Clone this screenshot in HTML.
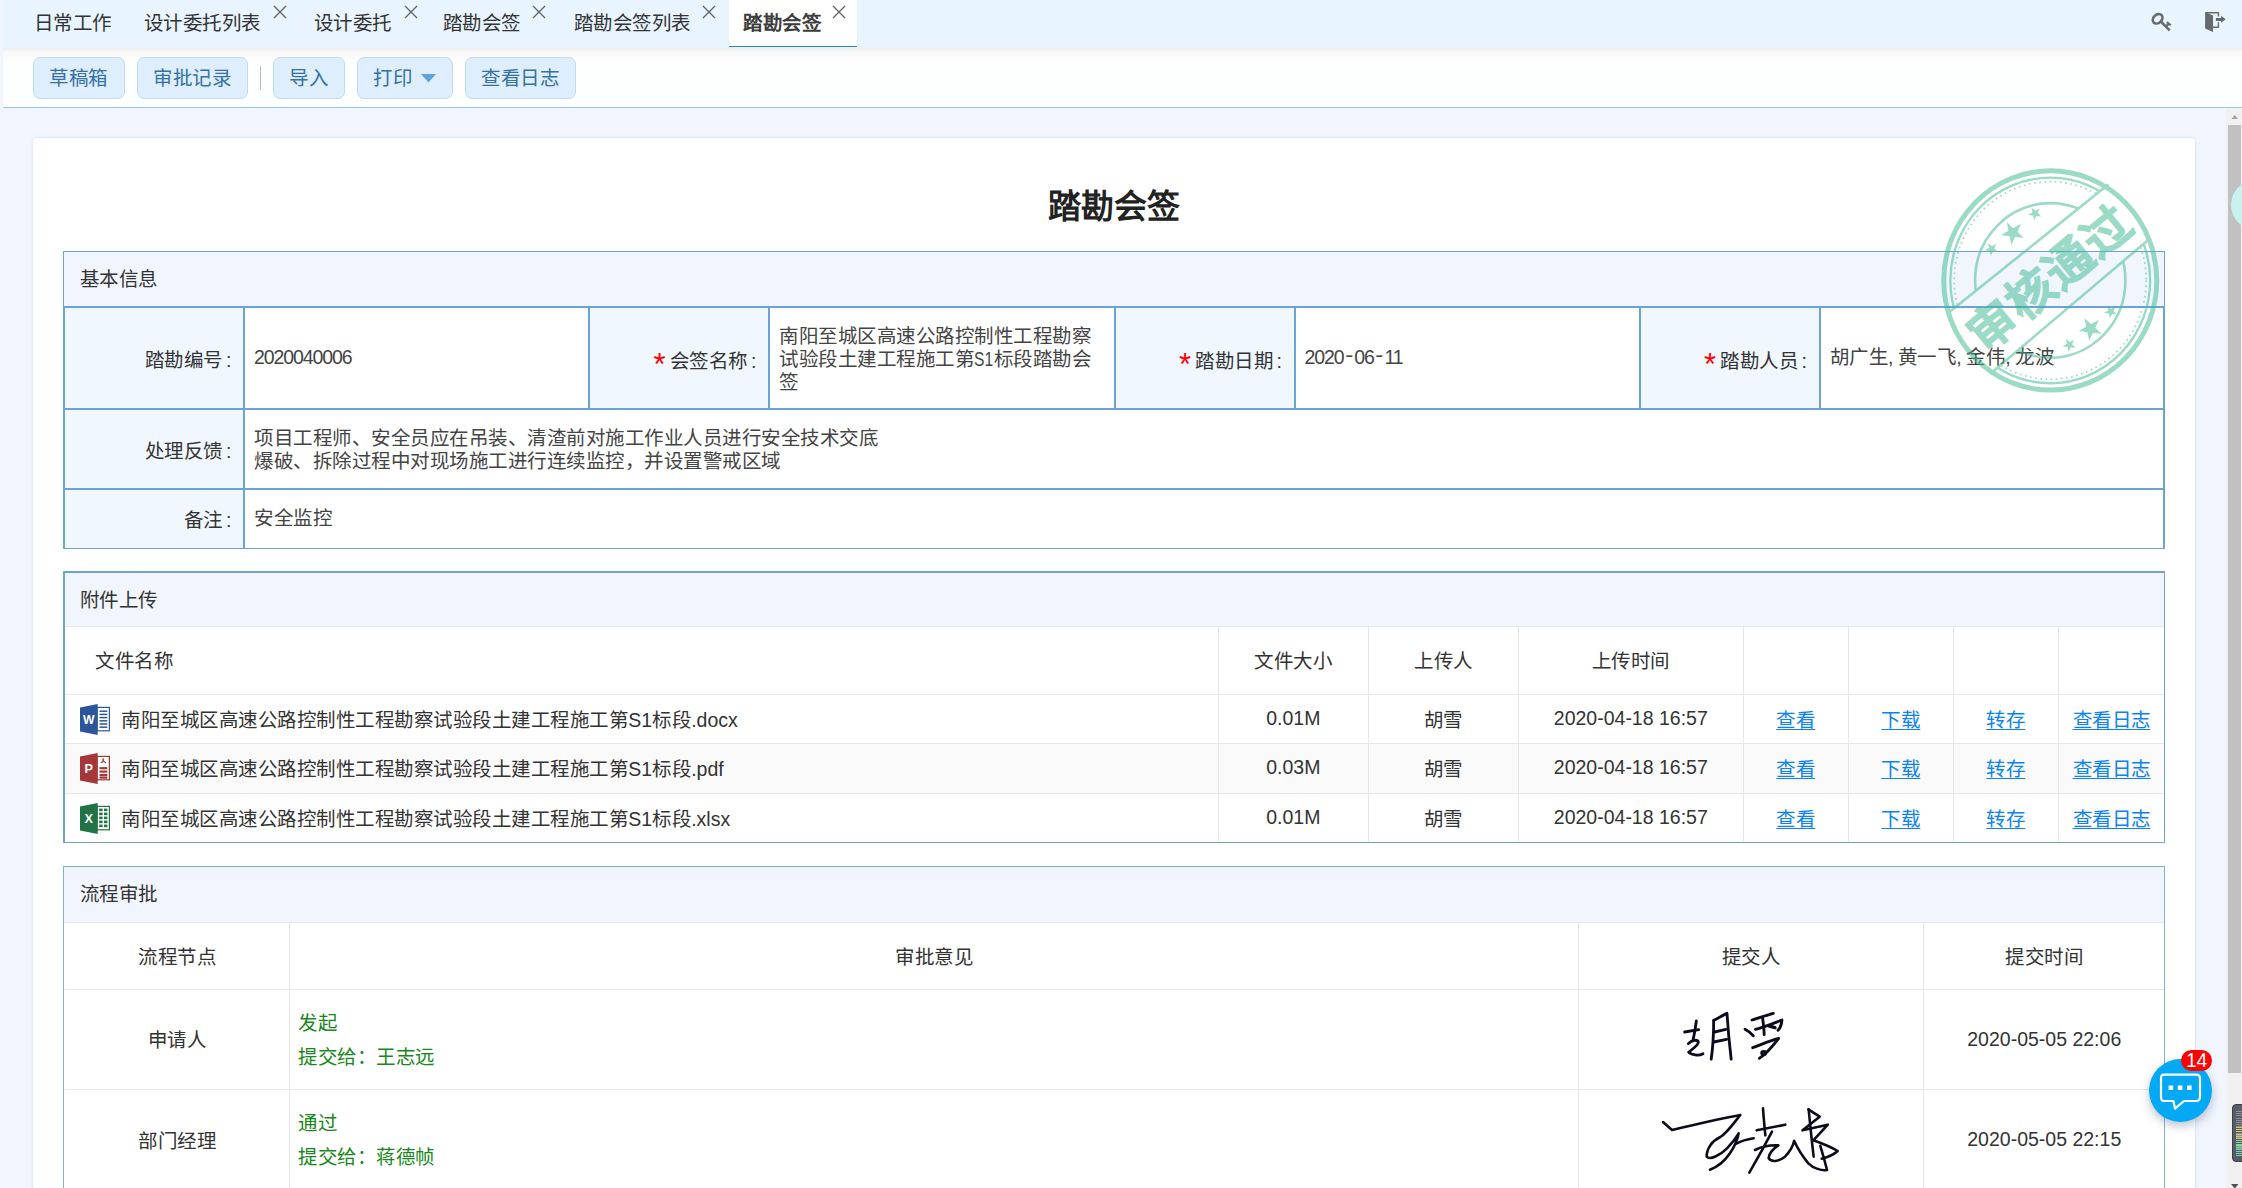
<!DOCTYPE html>
<html lang="zh-CN">
<head>
<meta charset="utf-8">
<title>踏勘会签</title>
<style>
*{box-sizing:border-box;margin:0;padding:0}
html,body{width:2242px;height:1188px;overflow:hidden;background:#f1f5fe;font-family:"Liberation Sans",sans-serif;color:#333;font-size:19.5px;letter-spacing:-.5px}
#tabbar{position:absolute;left:3px;top:0;width:2239px;height:48px;background:#e8f4ff}
.tab{position:absolute;top:0;height:48px;line-height:47px;font-size:19.5px;color:#333;white-space:nowrap}
.tab.on{height:47px;background:linear-gradient(#fff 0,#fff 45.6px,#2483d3 45.6px,#2483d3 47px);font-weight:bold;color:#3d3d3d}
.x{position:absolute;top:5px}
#toolbar{position:absolute;left:3px;top:48px;width:2239px;height:60px;background:linear-gradient(#ededed 0,#f8f8f8 4px,#fdfefe 14px,#fdfefe 100%);border-bottom:1.5px solid #9cc0e2}
.btn{position:absolute;top:9px;height:42px;line-height:40.6px;border:1.5px solid #c3dbf1;background:#dfeefc;border-radius:7px;color:#3371a6;font-size:19.5px;padding-left:15px;white-space:nowrap}
#card{position:absolute;left:33px;top:138px;width:2162px;height:1100px;background:#fff;border-radius:3.5px;box-shadow:0 0 3px rgba(190,205,230,.7)}
h1{position:absolute;left:0;width:2162px;top:45px;text-align:center;font-size:33px;line-height:48px;color:#222;font-weight:bold;letter-spacing:0}
.sec{position:absolute;left:30px;width:2102px;border:1.5px solid #6ba3d8;background:#fff;overflow:hidden}
.sh{height:56px;line-height:55px;padding-left:15.5px;background:#f1f5fe;font-size:19.5px;color:#333}
table{border-collapse:collapse;table-layout:fixed;width:100%}
#t2,#t3{border-style:hidden}
#t1 td{border:2px solid #6ba3d8;vertical-align:middle}
#t1 td.l{background:#f0f7ff;text-align:right;padding-right:11.5px;padding-top:2px;font-size:19.5px;color:#333}
#t1 td.l.r{padding-top:4px}
#t1 td.v{padding:0 9px;font-size:19.5px;color:#444;line-height:23.25px;vertical-align:top}
.req{color:#f00;margin-right:4px;font-size:31px;line-height:0;position:relative;top:6.5px;letter-spacing:0}
.hw{display:inline-block;width:19.5px;transform:scaleX(.8);transform-origin:0 50%;letter-spacing:0;white-space:nowrap}.dg{letter-spacing:-1.1px}.hy{letter-spacing:0;margin:0 1.6px 0 2.7px;position:relative;top:-1.5px;display:inline-block;transform:scaleX(1.25)}
.en{letter-spacing:0}
i.c{font-style:normal;margin-left:3.5px;letter-spacing:0}
#t2 td,#t3 td{border:1.5px solid #e6e6e6;text-align:center;font-size:19.5px;color:#333}
#t2 th,#t3 th{border:1.5px solid #e6e6e6;text-align:center;font-size:19.5px;color:#333;font-weight:normal}
#t2 th{padding-bottom:2px}
#t2 tr:nth-child(n+3) td{padding-bottom:1.6px}
#t3 td.n1{padding-bottom:2px}
a{color:#0b82f5;text-decoration:underline;text-decoration-thickness:1.4px;text-underline-offset:1.5px}
#t2 td.fn{text-align:left;padding-left:56px;position:relative}
#t3 td.op{text-align:left;padding-left:8px;padding-top:2px;color:#18881a;line-height:34px}
.ic{position:absolute;left:14.5px;top:9.2px}
</style>
</head>
<body>
<div id="tabbar"><div class="tab" style="left:30.5px">日常工作</div><div class="tab" style="left:140.5px">设计委托列表</div><svg class="x" style="left:270px" width="14" height="14" viewBox="0 0 14 14"><path d="M1,1L13,13M13,1L1,13" stroke="#666" stroke-width="1.4" fill="none"/></svg><div class="tab" style="left:310.5px">设计委托</div><svg class="x" style="left:400.5px" width="14" height="14" viewBox="0 0 14 14"><path d="M1,1L13,13M13,1L1,13" stroke="#666" stroke-width="1.4" fill="none"/></svg><div class="tab" style="left:439.5px">踏勘会签</div><svg class="x" style="left:529px" width="14" height="14" viewBox="0 0 14 14"><path d="M1,1L13,13M13,1L1,13" stroke="#666" stroke-width="1.4" fill="none"/></svg><div class="tab" style="left:570.5px">踏勘会签列表</div><svg class="x" style="left:699px" width="14" height="14" viewBox="0 0 14 14"><path d="M1,1L13,13M13,1L1,13" stroke="#666" stroke-width="1.4" fill="none"/></svg><div class="tab on" style="left:726px;width:128px;padding-left:14px">踏勘会签</div><svg class="x" style="left:829px" width="14" height="14" viewBox="0 0 14 14"><path d="M1,1L13,13M13,1L1,13" stroke="#666" stroke-width="1.4" fill="none"/></svg>
<svg style="position:absolute;left:2146px;top:9px" width="26" height="26" viewBox="0 0 26 26" fill="none" stroke="#666a6c"><ellipse cx="8.6" cy="9.8" rx="5.4" ry="4.1" transform="rotate(-42 8.6 9.8)" stroke-width="2.6"/><path d="M11.8,12.5L20.7,21.4" stroke-width="2.5"/><path d="M17.2,17.3L20,14.6" stroke-width="2.2"/><path d="M17.8,13.1L21.9,16.3" stroke-width="2"/></svg>
<svg style="position:absolute;left:2200px;top:10px" width="26" height="24" viewBox="0 0 26 24"><path d="M2.8,2.700H15.400V6.500M15.400,12.200V17.200H9" fill="none" stroke="#666a6c" stroke-width="1.400"/><path d="M2.100,2L10.050,5.500V22L2.100,18.500Z" fill="#666a6c"/><path d="M12.900,8H18V5.800L22.700,9.300L18,12.800V10.900H12.900Z" fill="#666a6c"/></svg>
</div>
<div id="toolbar">
<div class="btn" style="left:30px;width:92px">草稿箱</div>
<div class="btn" style="left:134px;width:111px">审批记录</div>
<div style="position:absolute;left:256.8px;top:18px;width:1.6px;height:24px;background:#bbb"></div>
<div class="btn" style="left:270px;width:72px">导入</div>
<div class="btn" style="left:354px;width:96px">打印<svg style="position:absolute;left:62.5px;top:15.5px" width="15" height="9" viewBox="0 0 15 9"><path d="M0,0H15L7.5,8.4Z" fill="#5fa2d8"/></svg></div>
<div class="btn" style="left:462px;width:111px">查看日志</div>
</div>
<div id="card">
<h1>踏勘会签</h1>
<div class="sec" id="s1" style="top:113px;height:298px">
<div class="sh">基本信息</div>
<table id="t1" style="position:absolute;left:-1.5px;top:54px;width:2100.700px">
<colgroup><col style="width:180.5px"><col style="width:345px"><col style="width:180px"><col style="width:345.5px"><col style="width:180px"><col style="width:345px"><col style="width:180px"><col style="width:344.7px"></colgroup>
<tr style="height:101.5px"><td class="l">踏勘编号<i class="c">:</i></td><td class="v"><div style="padding-top:37.5px" class="dg">2020040006</div></td><td class="l r"><span class="req">*</span>会签名称<i class="c">:</i></td><td class="v"><div style="padding-top:16.5px">南阳至城区高速公路控制性工程勘察试验段土建工程施工第<span class="hw">S1</span>标段踏勘会签</div></td><td class="l r"><span class="req">*</span>踏勘日期<i class="c">:</i></td><td class="v"><div style="padding-top:37.5px" class="dg">2020<span class="hy">-</span>06<span class="hy">-</span>11</div></td><td class="l r"><span class="req">*</span>踏勘人员<i class="c">:</i></td><td class="v"><div style="padding-top:37.5px">胡广生, 黄一飞, 金伟, 龙波</div></td></tr>
<tr style="height:80px"><td class="l">处理反馈<i class="c">:</i></td><td class="v" colspan="7"><div style="padding-top:17.5px">项目工程师、安全员应在吊装、清渣前对施工作业人员进行安全技术交底<br>爆破、拆除过程中对现场施工进行连续监控，并设置警戒区域</div></td></tr>
<tr style="height:60px"><td class="l" style="padding-top:0">备注<i class="c">:</i></td><td class="v" colspan="7"><div style="padding-top:17.5px">安全监控</div></td></tr>
</table>
</div>

<div class="sec" id="s2" style="top:432.5px;height:272px;border-width:2px 1px 1px 2px">
<div class="sh" style="height:54.5px;border-bottom:1px solid #e6e8ee;padding-left:14.5px">附件上传</div>
<table id="t2" style="position:absolute;left:.3px;top:54px;width:2098.700px">
<colgroup><col style="width:1153px"><col style="width:150px"><col style="width:150px"><col style="width:225px"><col style="width:105px"><col style="width:105px"><col style="width:105px"><col style="width:106px"></colgroup>
<tr style="height:67.5px"><th style="text-align:left;padding-left:30px">文件名称</th><th>文件大小</th><th>上传人</th><th>上传时间</th><th></th><th></th><th></th><th></th></tr>
<tr style="height:49.5px"><td class="fn"><svg class="ic" width="30" height="31" viewBox="0 0 30 31"><rect x="17" y="3.4" width="12.4" height="23.4" fill="#fff" stroke="#2b579a" stroke-width="1.2"/><path d="M19.5,7.2H27.3" stroke="#2b579a" stroke-width="1.5"/><path d="M19.5,10.4H27.3" stroke="#2b579a" stroke-width="1.5"/><path d="M19.5,13.6H27.3" stroke="#2b579a" stroke-width="1.5"/><path d="M19.5,16.8H27.3" stroke="#2b579a" stroke-width="1.5"/><path d="M19.5,20H27.3" stroke="#2b579a" stroke-width="1.5"/><path d="M19.5,23.2H27.3" stroke="#2b579a" stroke-width="1.5"/><path d="M0,3.6L17.7,0V31L0,27.6Z" fill="#2b579a"/><text x="8.6" y="20.4" text-anchor="middle" font-size="13.5" font-weight="bold" fill="#fff" font-family="'Liberation Sans',sans-serif" textLength="11" lengthAdjust="spacingAndGlyphs">W</text></svg>南阳至城区高速公路控制性工程勘察试验段土建工程施工第<span class="en">S1</span>标段<span class="en">.docx</span></td><td class="en">0.01M</td><td>胡雪</td><td class="en">2020-04-18 16:57</td><td><a>查看</a></td><td><a>下载</a></td><td><a>转存</a></td><td><a>查看日志</a></td></tr>
<tr style="height:49.5px;background:#fafafa"><td class="fn"><svg class="ic" width="30" height="31" viewBox="0 0 30 31"><rect x="17" y="3.4" width="12.4" height="23.4" fill="#fff" stroke="#a4373a" stroke-width="1.2"/><path d="M23.2,5.5c-.6,2 .6,3.3 2.4,4.2M23.2,5.5c.3,2-.9,3.6-2,4.6M20.6,9.6c1.6-1.1 3.6-1 5.3,.1" fill="none" stroke="#a4373a" stroke-width="1"/><path d="M19.5,15.2H27.3" stroke="#a4373a" stroke-width="2.2"/><path d="M19.5,18.6H27.3" stroke="#a4373a" stroke-width="2.2"/><path d="M19.5,22H27.3" stroke="#a4373a" stroke-width="2.2"/><path d="M19.5,24.6H27.3" stroke="#a4373a" stroke-width="2.2"/><path d="M0,3.6L17.7,0V31L0,27.6Z" fill="#a4373a"/><text x="8.6" y="20.4" text-anchor="middle" font-size="13.5" font-weight="bold" fill="#fff" font-family="'Liberation Sans',sans-serif" textLength="8" lengthAdjust="spacingAndGlyphs">P</text></svg>南阳至城区高速公路控制性工程勘察试验段土建工程施工第<span class="en">S1</span>标段<span class="en">.pdf</span></td><td class="en">0.03M</td><td>胡雪</td><td class="en">2020-04-18 16:57</td><td><a>查看</a></td><td><a>下载</a></td><td><a>转存</a></td><td><a>查看日志</a></td></tr>
<tr style="height:49.5px"><td class="fn"><svg class="ic" width="30" height="31" viewBox="0 0 30 31"><rect x="17" y="3.4" width="12.4" height="23.4" fill="#fff" stroke="#217346" stroke-width="1.2"/><rect x="19.2" y="5.6" width="3.4" height="2.6" fill="#217346"/><rect x="19.2" y="9.6" width="3.4" height="2.6" fill="#217346"/><rect x="19.2" y="13.6" width="3.4" height="2.6" fill="#217346"/><rect x="19.2" y="17.6" width="3.4" height="2.6" fill="#217346"/><rect x="19.2" y="21.6" width="3.4" height="2.6" fill="#217346"/><rect x="24" y="5.6" width="3.4" height="2.6" fill="#217346"/><rect x="24" y="9.6" width="3.4" height="2.6" fill="#217346"/><rect x="24" y="13.6" width="3.4" height="2.6" fill="#217346"/><rect x="24" y="17.6" width="3.4" height="2.6" fill="#217346"/><rect x="24" y="21.6" width="3.4" height="2.6" fill="#217346"/><path d="M0,3.6L17.7,0V31L0,27.6Z" fill="#217346"/><text x="8.6" y="20.4" text-anchor="middle" font-size="13.5" font-weight="bold" fill="#fff" font-family="'Liberation Sans',sans-serif" textLength="8" lengthAdjust="spacingAndGlyphs">X</text></svg>南阳至城区高速公路控制性工程勘察试验段土建工程施工第<span class="en">S1</span>标段<span class="en">.xlsx</span></td><td class="en">0.01M</td><td>胡雪</td><td class="en">2020-04-18 16:57</td><td><a>查看</a></td><td><a>下载</a></td><td><a>转存</a></td><td><a>查看日志</a></td></tr>
</table>
</div>

<div class="sec" id="s3" style="top:728px;height:400px;border-width:1px;border-color:#7fb0dd">
<div class="sh" style="height:55.5px;border-bottom:1px solid #e6e8ee">流程审批</div>
<table id="t3" style="position:absolute;left:1px;top:54.7px;width:2099px">
<colgroup><col style="width:224.5px"><col style="width:1289px"><col style="width:345px"><col style="width:241px"></colgroup>
<tr style="height:67.5px"><th>流程节点</th><th>审批意见</th><th>提交人</th><th>提交时间</th></tr>
<tr style="height:100px"><td class="n1">申请人</td><td class="op">发起<br>提交给：王志远</td><td></td><td class="en">2020-05-05 22:06</td></tr>
<tr style="height:100px"><td>部门经理</td><td class="op">通过<br>提交给：蒋德帧</td><td></td><td class="en">2020-05-05 22:15</td></tr>
</table>
</div>
<svg style="position:absolute;left:1607px;top:852px" width="240" height="200" viewBox="0 0 1440 1200" fill="none" stroke="#0b0b1c" stroke-width="17" stroke-linecap="round" stroke-linejoin="round">
<path d="M268,252L352,238"/><path d="M338,185C332,230 325,270 318,300"/>
<path d="M290,322C310,300 345,295 350,312C352,332 305,360 292,374C310,388 350,398 378,382"/>
<path d="M442,185C442,260 437,350 427,415"/><path d="M442,182C480,162 510,146 522,140C527,220 537,330 547,415"/>
<path d="M447,252L515,236"/><path d="M442,312L520,296"/>
<path d="M672,180C720,165 790,142 800,140"/><path d="M630,235C650,245 670,262 680,275"/>
<path d="M692,236C740,226 800,200 852,180C850,202 842,228 828,242"/>
<path d="M735,165C740,200 745,240 745,268"/><path d="M772,215L810,226" stroke-width="20"/>
<path d="M676,346C720,330 790,300 832,290C800,332 762,380 716,410"/>
<path d="M730,378a12,10 0 1 0 24,0a12,10 0 1 0 -24,0"/>
</svg>
<svg style="position:absolute;left:1607px;top:852px" width="240" height="200" viewBox="0 0 1440 1200" fill="none" stroke="#0b0b1c" stroke-width="15.5" stroke-linecap="round" stroke-linejoin="round">
<path d="M138,792L192,840C300,815 480,772 602,750C560,802 520,860 482,882C432,905 400,950 400,1000C420,1022 480,992 522,950C562,910 585,872 592,860C580,925 522,1042 420,1078"/>
<path d="M578,922C610,905 650,895 682,890"/>
<path d="M738,710C742,770 748,830 752,872"/><path d="M700,842L872,808"/>
<path d="M792,850C750,930 700,1020 656,1096"/>
<path d="M690,960C730,940 790,930 830,932C800,950 770,985 772,1010C790,1035 830,1030 870,1000C900,970 920,930 925,905C945,950 985,1010 1010,1040C1040,1070 1090,1085 1122,1080C1110,1030 1095,980 1082,935"/>
<path d="M1010,716L1078,760L975,842L1127,808L1040,902C1090,920 1150,945 1186,966C1160,990 1120,1005 1090,1012"/>
<path d="M1012,716C1020,800 1030,900 1042,1000"/>
</svg>
<svg id="stamp" width="2162" height="420" viewBox="0 0 2162 420" style="position:absolute;left:0;top:0;opacity:.5;pointer-events:none" fill="#3ab98f" stroke="#3ab98f">
<defs><clipPath id="cb"><path d="M1767,0H2267V500H1767ZM1765.7,294.7L2223.2,-71.9L2266.8,-26.5L1809.0,361.4Z" clip-rule="evenodd"/></clipPath></defs>
<ellipse cx="2017.25" cy="142.45" rx="106.53" ry="109.60" fill="none" stroke-width="5" />
<g clip-path="url(#cb)">
<ellipse cx="2017.25" cy="142.45" rx="99.92" ry="102.80" fill="none" stroke-width="2.4" />
<ellipse cx="2017.25" cy="142.45" rx="96.03" ry="98.80" fill="none" stroke-width="1.7" stroke-dasharray="1.7 3.5"/>
<ellipse cx="2017.25" cy="142.45" rx="75.14" ry="77.30" fill="none" stroke-width="2.6" />
<g stroke="none"><polygon points="1955.1,104.9 1958.9,108.2 1963.3,105.8 1961.3,110.4 1964.9,113.9 1959.9,113.4 1957.8,117.9 1956.7,113.0 1951.7,112.3 1956.0,109.8"/><polygon points="1973.8,84.3 1980.3,90.0 1987.9,85.9 1984.5,93.8 1990.7,99.7 1982.1,98.9 1978.4,106.7 1976.5,98.3 1968.0,97.1 1975.4,92.8"/><polygon points="1998.5,69.5 2002.3,72.8 2006.7,70.4 2004.7,75.0 2008.3,78.5 2003.3,78.0 2001.2,82.5 2000.1,77.6 1995.1,76.9 1999.4,74.4"/><polygon points="2032.9,200.8 2036.7,204.1 2041.1,201.7 2039.1,206.3 2042.7,209.8 2037.7,209.3 2035.6,213.8 2034.5,208.9 2029.5,208.2 2033.8,205.7"/><polygon points="2051.6,180.3 2058.1,186.0 2065.7,181.9 2062.3,189.8 2068.5,195.7 2059.9,194.9 2056.2,202.7 2054.3,194.3 2045.8,193.1 2053.2,188.8"/><polygon points="2074.3,167.5 2078.1,170.8 2082.5,168.4 2080.5,173.0 2084.1,176.5 2079.1,176.0 2077.0,180.5 2075.9,175.6 2070.9,174.9 2075.2,172.4"/></g>
</g>
<path d="M1913.6,176.2L2075.3,46.6M1957.0,236.0L2117.3,100.2" fill="none" stroke-width="2.6"/>
<text transform="translate(2016.6,139.6) rotate(-39.5)" x="0" y="17.5" text-anchor="middle" font-size="47.5" font-weight="bold" stroke-width="1.1" letter-spacing="2.2" font-family="'Liberation Sans',sans-serif">审核通过</text>
</svg>
</div>
<!-- scrollbar -->
<div style="position:absolute;left:2226px;top:108.5px;width:16px;height:1080px;background:#f1f1f1"></div>
<div style="position:absolute;left:2228px;top:125px;width:13px;height:948px;background:#c1c1c1"></div>
<svg style="position:absolute;left:2230.5px;top:114.500px" width="7.5" height="4.5" viewBox="0 0 10 6"><path d="M0,6L5,0L10,6Z" fill="#a3a3a3"/></svg>
<svg style="position:absolute;left:2230.5px;top:1184px" width="7.5" height="4.5" viewBox="0 0 10 6"><path d="M0,0L5,6L10,0Z" fill="#505050"/></svg>
<div style="position:absolute;left:2231px;top:180px;width:50px;height:50px;border-radius:25px;background:#c9f1f0"></div>
<div style="position:absolute;left:2232px;top:1104px;width:14px;height:58px;border-radius:4px;background:#575c68;border:1px solid #3c404a"></div>
<div style="position:absolute;left:2236px;top:1111px;width:6px;height:45px;background:repeating-linear-gradient(#8a8f99 0,#8a8f99 1px,transparent 1px,transparent 2.2px)"></div>
<div style="position:absolute;left:2236px;top:1127px;width:6px;height:29px;background:repeating-linear-gradient(#d8c860 0,#d8c860 1px,transparent 1px,transparent 2.2px)"></div>
<div style="position:absolute;left:2236px;top:1140px;width:6px;height:16px;background:repeating-linear-gradient(#6fd8b0 0,#6fd8b0 1px,transparent 1px,transparent 2.2px)"></div>
<!-- chat -->
<div style="position:absolute;left:2149px;top:1058.5px;width:63px;height:63px;border-radius:50%;background:#03a9f4;box-shadow:0 4px 10px rgba(60,80,120,.35)"></div>
<svg style="position:absolute;left:2158px;top:1071px" width="46" height="40" viewBox="0 0 46 40" fill="none" stroke="#fff" stroke-width="2.2" stroke-linejoin="round"><path d="M6,3.6H38Q42,3.6 42,7.6V26Q42,30 38,30H26L17,37.6L15.4,30H6Q3,30 3,26V7.6Q3,3.600 6,3.6Z"/><path d="M10.6,16.8h4.6M19.8,16.8h4.6M29,16.8h4.600" stroke-width="4.6"/></svg>
<div style="position:absolute;left:2181px;top:1050px;width:31px;height:21px;border-radius:10.5px;background:#f00;color:#fff;font-size:19.5px;line-height:21px;text-align:center;letter-spacing:-.3px">14</div>
</body>
</html>
